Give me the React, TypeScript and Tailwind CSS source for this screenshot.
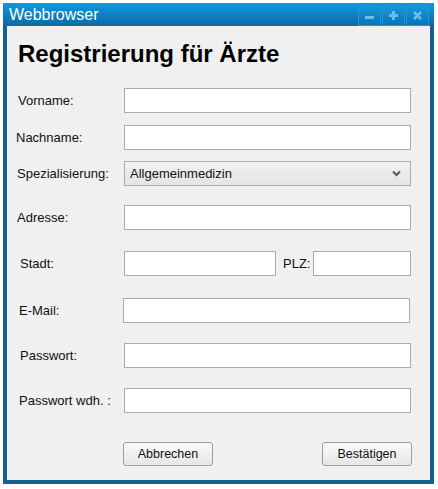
import React from 'react';

const font = { fontFamily: '"Liberation Sans", Arial, sans-serif' };

const TitleButton = ({ children }: { children: React.ReactNode }) => (
  <div className="w-[23px] h-[21px] flex items-center justify-center bg-gradient-to-b from-[#1399df] to-[#0b74b6] border border-[#2894cf]">
    {children}
  </div>
);

const Field = ({ w = 'w-[287px]' }: { w?: string }) => (
  <input className={`${w} h-[25px] bg-white border border-[#ababab] outline-none`} />
);

const Row = ({ label, pl, mt, children }: { label: string; pl: string; mt: string; children: React.ReactNode }) => (
  <div className={`flex items-center ${mt}`}>
    <div className={`w-[117px] ${pl} text-[13px] text-[#111]`}>{label}</div>
    {children}
  </div>
);

const Button = ({ label }: { label: string }) => (
  <button className="w-[90px] h-[24px] rounded-[3px] border border-[#a39a90] bg-gradient-to-b from-[#fbfbfb] to-[#e6e6e6] text-[12.5px] text-[#111]">
    {label}
  </button>
);

export default function App() {
  return (
    <div className="w-[438px] h-[489px] bg-white pl-[3px] pt-[3px]" style={font}>
      <div className="w-[431px] h-[481px] bg-[#16618c] flex flex-col">
        {/* Title bar */}
        <div className="h-[23px] flex items-center bg-gradient-to-b from-[#0b9ae4] to-[#0d6aa3] pl-[6px] pr-[5px]">
          <span className="text-white text-[16px] leading-none">Webbrowser</span>
          <div className="ml-auto flex gap-[1px] mt-[1px]">
            <TitleButton>
              <svg width="11" height="11" viewBox="0 0 11 11">
                <rect x="1" y="6" width="9" height="3" fill="#6dbde6" />
              </svg>
            </TitleButton>
            <TitleButton>
              <svg width="11" height="11" viewBox="0 0 11 11">
                <rect x="1" y="4" width="9" height="3" fill="#6dbde6" />
                <rect x="4" y="1" width="3" height="9" fill="#6dbde6" />
              </svg>
            </TitleButton>
            <TitleButton>
              <svg width="11" height="11" viewBox="0 0 11 11">
                <path d="M2 2 L9 9 M9 2 L2 9" stroke="#6dbde6" strokeWidth="2.6" />
              </svg>
            </TitleButton>
          </div>
        </div>

        {/* Content */}
        <div className="flex-1 mx-[4px] mb-[4px] bg-[#f0f0f0] flex flex-col">
          <h1 className="pl-[11px] pt-[14px] text-[24px] leading-[28px] font-bold text-black">
            Registrierung für Ärzte
          </h1>

          <Row label="Vorname:" pl="pl-[11px]" mt="mt-[20px]">
            <Field />
          </Row>
          <Row label="Nachname:" pl="pl-[9px]" mt="mt-[12px]">
            <Field />
          </Row>
          <Row label="Spezialisierung:" pl="pl-[10px]" mt="mt-[11px]">
            <div className="w-[287px] h-[25px] border border-[#ababab] bg-gradient-to-b from-[#f2f2f2] to-[#e4e4e4] flex items-center pl-[5px] pr-[9px] text-[13px] text-[#111]">
              <span>Allgemeinmedizin</span>
              <svg className="ml-auto" width="9" height="7" viewBox="0 0 9 7">
                <path d="M1 1.5 L4.5 5 L8 1.5" stroke="#555" strokeWidth="2" fill="none" />
              </svg>
            </div>
          </Row>
          <Row label="Adresse:" pl="pl-[10px]" mt="mt-[19px]">
            <Field />
          </Row>
          <Row label="Stadt:" pl="pl-[13px]" mt="mt-[21px]">
            <Field w="w-[152px]" />
            <span className="ml-[7px] w-[30px] text-[13px] text-[#111]">PLZ:</span>
            <Field w="w-[98px]" />
          </Row>
          <div className="flex items-center mt-[22px]">
            <div className="w-[116px] pl-[12px] text-[13px] text-[#111]">E-Mail:</div>
            <Field />
          </div>
          <Row label="Passwort:" pl="pl-[13px]" mt="mt-[20px]">
            <Field />
          </Row>
          <Row label="Passwort wdh. :" pl="pl-[12px]" mt="mt-[20px]">
            <Field />
          </Row>

          <div className="flex mt-[29px] pl-[116px] w-[405px] justify-between">
            <Button label="Abbrechen" />
            <Button label="Bestätigen" />
          </div>
        </div>
      </div>
    </div>
  );
}
